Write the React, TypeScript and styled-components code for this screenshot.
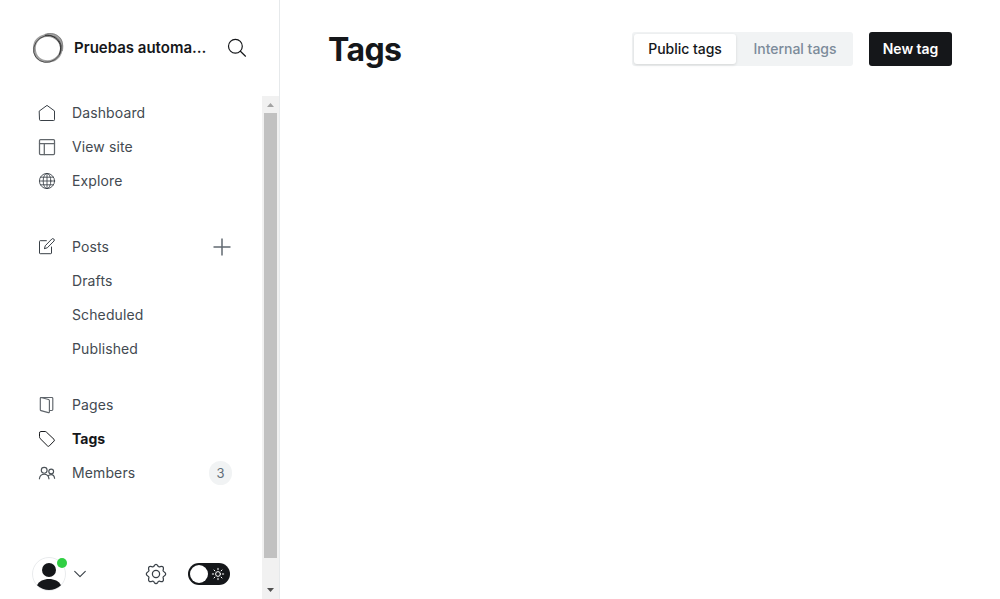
import React from "react";
import styled, { createGlobalStyle } from "styled-components";

const GlobalStyle = createGlobalStyle`
  *, *::before, *::after { box-sizing: border-box; }
  html, body { margin: 0; padding: 0; background: #fff; overflow: hidden; }
  body { font-family: Inter, "Liberation Sans", sans-serif; color: #15171a; }
  svg { display: block; flex: none; }
`;

const Page = styled.div`
  display: flex;
  width: 100vw;
  height: 100vh;
`;

const Sidebar = styled.aside`
  display: flex;
  flex-direction: column;
  flex: none;
  width: 280px;
  border-right: 1px solid #e6e9eb;
`;

const SiteHeader = styled.header`
  display: flex;
  align-items: center;
  height: 96px;
  padding: 0 32px;
`;

const SiteName = styled.div`
  width: 143px;
  margin-left: 10px;
  font-size: 15px;
  font-weight: 600;
  line-height: 20px;
  white-space: nowrap;
`;

const SearchButton = styled.button`
  display: flex;
  padding: 0;
  margin-left: 10px;
  border: 0;
  background: none;
`;

const SidebarBody = styled.div`
  display: flex;
  flex: 1;
  min-height: 0;
`;

const NavColumn = styled.div`
  display: flex;
  flex-direction: column;
  flex: 1;
`;

const Nav = styled.nav`
  flex: 1;
`;

const NavGroup = styled.div<{ $gap: number }>`
  margin-bottom: ${(p) => p.$gap}px;
`;

const NavItem = styled.a<{ $active?: boolean }>`
  display: flex;
  align-items: center;
  height: 34px;
  padding: 0 30px 0 38px;
  color: ${(p) => (p.$active ? "#15171a" : "#434a51")};
  font-size: 14px;
  font-weight: ${(p) => (p.$active ? 700 : 400)};
  letter-spacing: ${(p) => (p.$active ? 0 : 0.12)}px;
`;

const IconSlot = styled.span`
  display: flex;
  width: 34px;
  flex: none;
`;

const ItemLabel = styled.span`
  flex: 1;
  padding-bottom: 2px;
`;

const CountBadge = styled.span`
  display: flex;
  align-items: center;
  justify-content: center;
  width: 23px;
  height: 24px;
  border-radius: 12px;
  background: #f1f3f4;
  color: #626d79;
  font-size: 13px;
  letter-spacing: 0;
`;

const ScrollTrack = styled.div`
  display: flex;
  flex-direction: column;
  align-items: center;
  width: 17px;
  background: #f1f1f1;
`;

const ScrollArrow = styled.div<{ $end?: boolean }>`
  display: flex;
  align-items: center;
  justify-content: center;
  width: 17px;
  height: 17px;
  padding-bottom: ${(p) => (p.$end ? 1 : 0)}px;
  margin-top: ${(p) => (p.$end ? "auto" : 0)};
`;

const ScrollThumb = styled.div`
  width: 13px;
  height: 445px;
  background: #c1c1c1;
`;

const Footer = styled.footer`
  display: flex;
  align-items: center;
  height: 50px;
  padding: 0 32px;
`;

const Avatar = styled.div`
  position: relative;
  width: 34px;
  height: 34px;
`;

const StatusDot = styled.span`
  position: absolute;
  top: 1px;
  right: -1px;
  width: 10px;
  height: 10px;
  border-radius: 50%;
  background: #30cf43;
`;

const FooterIcon = styled.span<{ $left: number }>`
  display: flex;
  margin-left: ${(p) => p.$left}px;
`;

const Toggle = styled.button`
  display: flex;
  align-items: center;
  justify-content: space-between;
  width: 42px;
  height: 22px;
  margin-left: 21px;
  padding: 0 5px 0 2px;
  border: 0;
  border-radius: 11px;
  background: #15171a;
`;

const ToggleKnob = styled.span`
  width: 18px;
  height: 18px;
  border-radius: 50%;
  background: #fff;
`;

const Main = styled.main`
  flex: 1;
  padding: 32px 48px 0 48px;
`;

const Toolbar = styled.header`
  display: flex;
  align-items: center;
  height: 34px;
`;

const Title = styled.h1`
  flex: 1;
  margin: 0;
  padding-top: 2px;
  font-size: 32px;
  font-weight: 700;
  line-height: 40px;
  letter-spacing: -0.6px;
`;

const Segmented = styled.div`
  display: flex;
  width: 221px;
  height: 34px;
  margin-right: 16px;
  padding: 2px;
  border-radius: 3px;
  background: #f1f3f4;
`;

const Segment = styled.button<{ $selected?: boolean }>`
  width: ${(p) => (p.$selected ? 102 : 115)}px;
  height: 30px;
  padding: ${(p) => (p.$selected ? "0 0 2px" : "0 0 2px 3px")};
  border: 0;
  border-radius: 3px;
  background: ${(p) => (p.$selected ? "#fff" : "transparent")};
  box-shadow: ${(p) => (p.$selected ? "0 1px 3px rgba(0, 0, 0, 0.12)" : "none")};
  color: ${(p) => (p.$selected ? "#15171a" : "#7c8b9a")};
  font: 500 14px Inter, sans-serif;
  letter-spacing: -0.03px;
  white-space: nowrap;
`;

const PrimaryButton = styled.button`
  width: 83px;
  height: 34px;
  padding: 0 0 2px;
  border: 0;
  border-radius: 3px;
  background: #15171a;
  color: #fff;
  font: 600 14px Inter, sans-serif;
  letter-spacing: -0.05px;
  white-space: nowrap;
`;

type GlyphProps = { size?: number; color?: string; width?: number; children: React.ReactNode };

const Glyph = ({ size = 18, color = "#394047", width = 1, children }: GlyphProps) => (
  <svg width={size} height={size} viewBox={`0 0 ${size} ${size}`} fill="none" stroke={color}
    strokeWidth={width} strokeLinecap="round" strokeLinejoin="round">{children}</svg>
);

const Logo = () => (
  <svg width="32" height="32" viewBox="0 0 32 32" fill="none">
    <path fillRule="evenodd" fill="#a0a0a0" d="M12 2.6C15 .2 23 .6 27 4.5C31 7 31.6 13 30.8 17C30 23.5 26 28 22 29.5C16 31.6 10 30.8 5.5 27.5C1 24 -.2 16 2 10.5C4 6 8 3.7 12 2.6ZM16 5C9 4.2 4 9.5 3.8 16C3.6 23.5 9 28.2 15.5 28.2C22.5 28.2 28 22.5 28 16.5C28 10 23 5.5 16 5Z" />
    <ellipse cx="15.5" cy="16.9" rx="14.3" ry="13" stroke="#4c4c4c" strokeWidth=".9" transform="rotate(-35 15.5 16.9)" />
    <path d="M13 3.3C19 2.5 25.5 5.6 28.2 12.5C28.9 16 28.4 20 27.5 22.5" stroke="#333" />
    <path d="M14 2.5C18.5 .5 25 1.8 28 6C30.8 9.5 31.3 15 30.3 19" stroke="#777" strokeWidth=".7" />
  </svg>
);

const SearchIcon = () => (
  <Glyph size={20} color="#15171a" width={1.2}>
    <circle cx="8.4" cy="8.2" r="6.9" /><path d="M13.4 13.2L18.5 18.2" />
  </Glyph>
);

const HomeIcon = () => (
  <Glyph><path d="M1.5 6.9L9 1.4L16.5 6.9V15.7Q16.5 16.5 15.7 16.5H2.3Q1.5 16.5 1.5 15.7Z" /></Glyph>
);

const LayoutIcon = () => (
  <Glyph color="#62676c" width={1.25}><rect x="1.5" y="1.5" width="15" height="15" rx="1" /><path d="M1.5 5.7H16.5M6.3 5.7V16.5" /></Glyph>
);

const GlobeIcon = () => (
  <Glyph width={0.85}>
    <circle cx="9" cy="9" r="7.6" /><ellipse cx="9" cy="9" rx="3.8" ry="7.6" />
    <path d="M9 1.4V16.6M1.4 9H16.6M2.6 5.2H15.4M2.6 12.8H15.4" />
  </Glyph>
);

const ComposeIcon = () => (
  <Glyph>
    <path d="M8.4 2.7H2.2Q1.5 2.7 1.5 3.4V15Q1.5 15.7 2.2 15.7H12.8Q13.5 15.7 13.5 15V9" />
    <path d="M6.5 10.6L7.2 7.8L13.8 1Q14.8.1 15.8 1Q16.8 2 16 3L9.3 9.8L6.5 10.6" />
  </Glyph>
);

const PagesIcon = () => (
  <Glyph color="#5f656b" width={1.15}>
    <path d="M11.5 14.5H13.9Q14.8 14.5 14.8 13.6V2.4Q14.8 1.5 13.9 1.5H3" />
    <path d="M3 1.5Q2.3 1.5 2.3 2.3V13.7Q2.3 14.4 3 14.6L10.4 16.6Q11.4 16.8 11.4 15.8V4.6Q11.4 3.8 10.6 3.5L3 1.5Z" />
  </Glyph>
);

const TagIcon = () => (
  <Glyph color="#15171a"><path d="M1.5 2.8Q1.5 1.5 2.8 1.5H7Q7.8 1.5 8.4 2.1L16 9.3Q16.9 10.2 16 11.1L11.3 15.9Q10.4 16.8 9.5 15.9L2.1 8.5Q1.5 7.9 1.5 7Z" /></Glyph>
);

const MembersIcon = () => (
  <Glyph color="#4b5258" width={1.15}>
    <circle cx="6.2" cy="6.3" r="2.9" /><circle cx="13.2" cy="7.5" r="2.4" />
    <path d="M1.4 14.8Q2 10.2 6.2 10.2Q10.3 10.2 11 14.8M10.2 11.9Q11.2 10.6 13.2 10.6Q16 10.6 16.6 14.3" />
  </Glyph>
);

const PlusIcon = () => (
  <svg width="20" height="18" viewBox="0 0 20 18" fill="none" stroke="#626a72" strokeWidth="1.5"><path d="M1.5 9H18.5M10 .5V17.5" /></svg>
);

const PersonIcon = () => (
  <svg width="34" height="34" viewBox="0 0 34 34">
    <circle cx="17" cy="17" r="16.5" fill="#fff" stroke="#e9ebed" />
    <circle cx="17" cy="13" r="7" fill="#15171a" />
    <path d="M5 28.3C8.5 19.8 25.5 19.8 29 28.3C22.5 34.7 11.5 34.7 5 28.3Z" fill="#15171a" />
  </svg>
);

const ChevronIcon = () => (
  <Glyph size={14} width={1.1}><path d="M1.7 4.3L7 9.7L12.3 4.3" /></Glyph>
);

const GearIcon = () => (
  <Glyph size={22} width={1.25}>
    <circle cx="11" cy="11" r="3.6" />
    <path d="M9.2 2.7Q11-.1 12.8 2.7Q13.5 4.4 15.2 3.6Q18.9 2.4 18.4 6.3Q17.4 8.2 19.3 9Q22.1 11 19.3 13Q17.4 13.8 18.4 15.7Q18.9 19.6 15.2 18.4Q13.5 17.6 12.8 19.3Q11 22.1 9.2 19.3Q8.5 17.6 6.8 18.4Q3.1 19.6 3.6 15.7Q4.6 13.8 2.7 13Q-.1 11 2.7 9Q4.6 8.2 3.6 6.3Q3.1 2.4 6.8 3.6Q8.5 4.4 9.2 2.7Z" />
  </Glyph>
);

const SunIcon = () => (
  <Glyph size={14} color="#fff" width={1}>
    <circle cx="7" cy="7" r="2.4" />
    <path d="M7 1.3V2.7M7 11.3V12.7M1.3 7H2.7M11.3 7H12.7M3 3L3.9 3.9M10.1 10.1L11 11M3 11L3.9 10.1M10.1 3.9L11 3" />
  </Glyph>
);

export default function App() {
  return (
    <Page>
      <GlobalStyle />
      <Sidebar>
        <SiteHeader>
          <Logo />
          <SiteName>Pruebas automa…</SiteName>
          <SearchButton aria-label="Search"><SearchIcon /></SearchButton>
        </SiteHeader>
        <SidebarBody>
          <NavColumn>
            <Nav>
              <NavGroup $gap={32}>
                <NavItem><IconSlot><HomeIcon /></IconSlot><ItemLabel>Dashboard</ItemLabel></NavItem>
                <NavItem><IconSlot><LayoutIcon /></IconSlot><ItemLabel>View site</ItemLabel></NavItem>
                <NavItem><IconSlot><GlobeIcon /></IconSlot><ItemLabel>Explore</ItemLabel></NavItem>
              </NavGroup>
              <NavGroup $gap={22}>
                <NavItem><IconSlot><ComposeIcon /></IconSlot><ItemLabel>Posts</ItemLabel><PlusIcon /></NavItem>
                <NavItem><IconSlot /><ItemLabel>Drafts</ItemLabel></NavItem>
                <NavItem><IconSlot /><ItemLabel>Scheduled</ItemLabel></NavItem>
                <NavItem><IconSlot /><ItemLabel>Published</ItemLabel></NavItem>
              </NavGroup>
              <NavGroup $gap={0}>
                <NavItem><IconSlot><PagesIcon /></IconSlot><ItemLabel>Pages</ItemLabel></NavItem>
                <NavItem $active><IconSlot><TagIcon /></IconSlot><ItemLabel>Tags</ItemLabel></NavItem>
                <NavItem><IconSlot><MembersIcon /></IconSlot><ItemLabel>Members</ItemLabel><CountBadge>3</CountBadge></NavItem>
              </NavGroup>
            </Nav>
            <Footer>
              <Avatar><PersonIcon /><StatusDot /></Avatar>
              <FooterIcon $left={7}><ChevronIcon /></FooterIcon>
              <FooterIcon $left={58}><GearIcon /></FooterIcon>
              <Toggle aria-label="Night shift"><ToggleKnob /><SunIcon /></Toggle>
            </Footer>
          </NavColumn>
          <ScrollTrack>
            <ScrollArrow><svg width="7" height="4" viewBox="0 0 7 4"><path d="M0 4L3.5 0L7 4Z" fill="#a3a3a3" /></svg></ScrollArrow>
            <ScrollThumb />
            <ScrollArrow $end><svg width="7" height="4" viewBox="0 0 7 4"><path d="M0 0L3.5 4L7 0Z" fill="#505050" /></svg></ScrollArrow>
          </ScrollTrack>
        </SidebarBody>
      </Sidebar>
      <Main>
        <Toolbar>
          <Title>Tags</Title>
          <Segmented>
            <Segment $selected>Public tags</Segment>
            <Segment>Internal tags</Segment>
          </Segmented>
          <PrimaryButton>New tag</PrimaryButton>
        </Toolbar>
      </Main>
    </Page>
  );
}
